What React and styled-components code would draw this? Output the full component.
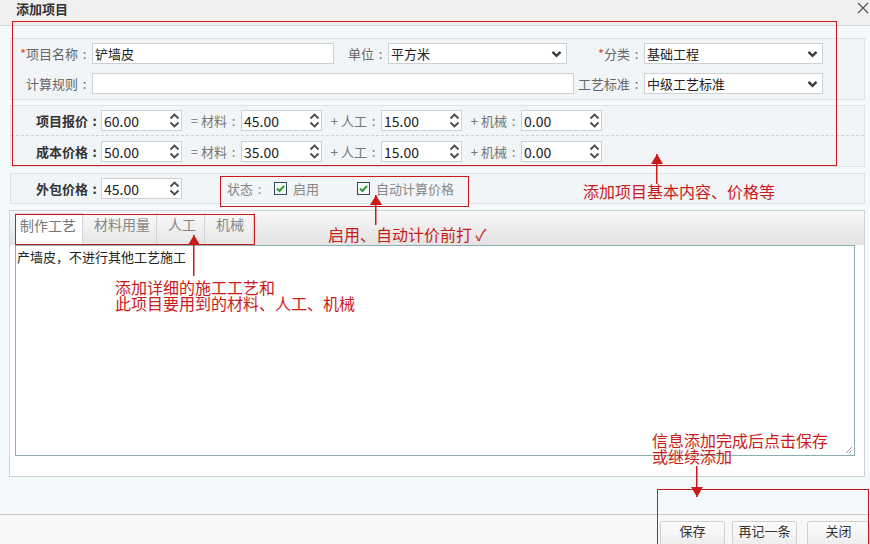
import styled, { createGlobalStyle } from "styled-components";

const GlobalStyle = createGlobalStyle`
    html, body {
        margin: 0;
        padding: 0;
        background: #ffffff;
    }
    * {
        box-sizing: border-box;
    }
`

const FONT = `"Noto Sans CJK SC", "Liberation Sans", sans-serif`;
const RED = "#cc1a1a";

const SpinIcon = () => (
    <svg width="11" height="17" viewBox="0 0 11 17">
        <path d="M1.5 6.5 L5.5 2.5 L9.5 6.5" fill="none" stroke="#4a4a4a" strokeWidth="1.8" />
        <path d="M1.5 10.5 L5.5 14.5 L9.5 10.5" fill="none" stroke="#4a4a4a" strokeWidth="1.8" />
    </svg>
)

const CaretIcon = () => (
    <svg width="11" height="8" viewBox="0 0 11 8">
        <path d="M1.5 1.8 L5.5 5.8 L9.5 1.8" fill="none" stroke="#3a3a3a" strokeWidth="2.4" />
    </svg>
)

const CheckIcon = () => (
    <svg width="13" height="13" viewBox="0 0 13 13">
        <rect x="0.5" y="0.5" width="12" height="12" fill="#f6f8f8" stroke="#2d4b5a" />
        <path d="M3 6.5 L5.5 9 L10 3.8" fill="none" stroke="#2f9a3a" strokeWidth="2" />
    </svg>
)

const C = () => <Colon>:</Colon>

export default function App() {
    return (
        <Dialog>
            <GlobalStyle />
            <TitleBar>
                <Title>添加项目</Title>
                <Close>
                    <svg width="12" height="12" viewBox="0 0 12 12">
                        <path d="M1 1 L11 11 M11 1 L1 11" stroke="#555" strokeWidth="1.2" />
                    </svg>
                </Close>
            </TitleBar>

            <Body>
                <Fieldset>
                    <Row>
                        <Label w={81}><Req>*</Req>项目名称<C /></Label>
                        <TextBox w={242}>铲墙皮</TextBox>
                        <Label w={54}>单位<C /></Label>
                        <Select w={179}><span>平方米</span><CaretIcon /></Select>
                        <Label w={77}><Req>*</Req>分类<C /></Label>
                        <Select w={179}><span>基础工程</span><CaretIcon /></Select>
                    </Row>
                    <Row>
                        <Label w={81}>计算规则<C /></Label>
                        <TextBox w={482} />
                        <Label w={70}>工艺标准<C /></Label>
                        <Select w={179}><span>中级工艺标准</span><CaretIcon /></Select>
                    </Row>
                </Fieldset>

                <PriceSet>
                    <PriceRow>
                        <BoldLabel>项目报价<C /></BoldLabel>
                        <Spinner><span>60.00</span><SpinIcon /></Spinner>
                        <OpLabel>= 材料<C /></OpLabel>
                        <Spinner><span>45.00</span><SpinIcon /></Spinner>
                        <OpLabel>+ 人工<C /></OpLabel>
                        <Spinner><span>15.00</span><SpinIcon /></Spinner>
                        <OpLabel>+ 机械<C /></OpLabel>
                        <Spinner><span>0.00</span><SpinIcon /></Spinner>
                    </PriceRow>
                    <PriceRow last>
                        <BoldLabel>成本价格<C /></BoldLabel>
                        <Spinner><span>50.00</span><SpinIcon /></Spinner>
                        <OpLabel>= 材料<C /></OpLabel>
                        <Spinner><span>35.00</span><SpinIcon /></Spinner>
                        <OpLabel>+ 人工<C /></OpLabel>
                        <Spinner><span>15.00</span><SpinIcon /></Spinner>
                        <OpLabel>+ 机械<C /></OpLabel>
                        <Spinner><span>0.00</span><SpinIcon /></Spinner>
                    </PriceRow>
                </PriceSet>

                <OutsourceSet>
                    <BoldLabel>外包价格<C /></BoldLabel>
                    <Spinner><span>45.00</span><SpinIcon /></Spinner>
                    <Status>
                        <StatusLabel>状态<C /></StatusLabel>
                        <Check><CheckIcon />启用</Check>
                        <Check><CheckIcon />自动计算价格</Check>
                    </Status>
                </OutsourceSet>

                <TabPanel>
                    <TabStrip>
                        <Tab active w={68}>制作工艺</Tab>
                        <Tab w={74}>材料用量</Tab>
                        <Tab w={48}>人工</Tab>
                        <Tab w={49}>机械</Tab>
                    </TabStrip>
                    <TextArea>
                        产墙皮，不进行其他工艺施工
                        <Grip>
                            <svg width="8" height="8" viewBox="0 0 8 8">
                                <path d="M7 1 L1 7 M7 4 L4 7" stroke="#999" strokeWidth="1" />
                            </svg>
                        </Grip>
                    </TextArea>
                </TabPanel>
            </Body>

            <Footer>
                <Button w={65}>保存</Button>
                <Button w={65}>再记一条</Button>
                <Button w={63} gap={10}>关闭</Button>
            </Footer>

            {/* red annotations drawn over the dialog */}
            <RedBox x={12} y={21} w={825} h={145} />
            <RedBox x={220} y={176} w={249} h={31} />
            <RedBox x={15} y={214} w={240} h={31} />
            <RedBox x={657} y={489} w={212} h={60} />

            <Arrow x={657} y={154} h={30} />
            <Note x={583} y={183}>添加项目基本内容、价格等</Note>

            <Arrow x={376} y={195} h={30} />
            <Note x={328} y={226}>启用、自动计价前打 ✓</Note>

            <Arrow x={194} y={235} h={41} />
            <Note x={115} y={279}>添加详细的施工工艺和<br />此项目要用到的材料、人工、机械</Note>

            <Note x={652} y={432}>信息添加完成后点击保存<br />或继续添加</Note>
            <Arrow x={697} y={466} h={31} down />
        </Dialog>
    )
}

const Dialog = styled.div`
    position: relative;
    width: 870px;
    height: 544px;
    overflow: hidden;
    display: flex;
    flex-direction: column;
    font-family: ${FONT};
    font-size: 13px;
    color: #666;
    background: #f4f9fc;
`

const TitleBar = styled.div`
    height: 26px;
    flex-shrink: 0;
    display: flex;
    justify-content: space-between;
    align-items: flex-start;
    padding: 1px 1px 0 16px;
    background: #f0f0f0;
    border-bottom: 1px solid #d6d6d6;
`

const Title = styled.div`
    font-size: 13px;
    font-weight: 700;
    color: #333;
    line-height: 16px;
`

const Close = styled.div`
    padding-top: 1px;
    line-height: 0;
`

const Body = styled.div`
    flex: 1;
    display: flex;
    flex-direction: column;
    padding: 12px 5px 0 10px;
    background: #f4f9fc;
`

const Fieldset = styled.div`
    display: flex;
    flex-direction: column;
    gap: 9px;
    padding: 4px 0 5px;
    background: #f2f5f8;
    border: 1px solid #dde3e8;
`

const Row = styled.div`
    display: flex;
    align-items: center;
    height: 21px;
`

const Colon = styled.span`
    display: inline-block;
    width: 13px;
    text-align: center;
`

const Label = styled.div`
    width: ${p => p.w}px;
    flex-shrink: 0;
    text-align: right;
    padding-right: 1px;
    white-space: nowrap;
    color: #666;
`

const Req = styled.span`
    color: #d9532c;
`

const TextBox = styled.div`
    width: ${p => p.w}px;
    height: 21px;
    flex-shrink: 0;
    padding-left: 2px;
    line-height: 19px;
    color: #222;
    background: #fff;
    border: 1px solid #cdd1d4;
`

const Select = styled.div`
    width: ${p => p.w}px;
    height: 21px;
    flex-shrink: 0;
    display: flex;
    justify-content: space-between;
    align-items: center;
    padding: 0 4px 0 2px;
    color: #222;
    background: #fff;
    border: 1px solid #cdd1d4;
`

const PriceSet = styled.div`
    margin-top: 5px;
    padding: 4px 0;
    background: #f2f5f8;
    border: 1px solid #dde3e8;
`

const PriceRow = styled.div`
    display: flex;
    align-items: center;
    padding-bottom: ${p => p.last ? "0" : "4px"};
    margin-bottom: ${p => p.last ? "0" : "5px"};
    border-bottom: ${p => p.last ? "none" : "1px dashed #cfd3d6"};
`

const BoldLabel = styled.div`
    width: 90px;
    flex-shrink: 0;
    text-align: right;
    white-space: nowrap;
    font-weight: 700;
    color: #333;
`

const OpLabel = styled.div`
    width: 59px;
    flex-shrink: 0;
    text-align: right;
    padding-right: 1px;
    white-space: nowrap;
    color: #777;
`

const Spinner = styled.div`
    width: 81px;
    height: 21px;
    flex-shrink: 0;
    display: flex;
    justify-content: space-between;
    align-items: center;
    padding: 0 1px 0 2px;
    font-size: 14px;
    color: #222;
    background: #fff;
    border: 1px solid #cdd1d4;
`

const OutsourceSet = styled.div`
    margin-top: 6px;
    display: flex;
    align-items: center;
    padding: 4px 0;
    background: #f2f5f8;
    border: 1px solid #dde3e8;
`

const Status = styled.div`
    display: flex;
    align-items: center;
    margin-left: 45px;
    color: #888;
`

const StatusLabel = styled.span`
    width: 47px;
    white-space: nowrap;
`

const Check = styled.label`
    display: flex;
    align-items: center;
    gap: 6px;
    margin-right: 38px;

    svg {
        flex-shrink: 0;
    }
`

const TabPanel = styled.div`
    margin-top: 6px;
    margin-left: -1px;
    padding-bottom: 20px;
    background: #fff;
    border: 1px solid #cdd3d6;
`

const TabStrip = styled.div`
    display: flex;
    height: 34px;
    padding: 2px 0 0 5px;
    background: linear-gradient(#f7f7f7, #e3e3e3);
`

const Tab = styled.div`
    width: ${p => p.w}px;
    height: 32px;
    padding-left: ${p => p.active ? 5 : 11}px;
    line-height: 22px;
    white-space: nowrap;
    font-size: 14px;
    color: ${p => p.active ? "#777" : "#888"};
    background: ${p => p.active ? "#fff" : "linear-gradient(#f8f8f8, #e6e6e6)"};
    border-right: 1px solid #d2d2d2;
    border-top: ${p => p.active ? "1px solid #d8d8d8" : "none"};
`

const TextArea = styled.div`
    position: relative;
    height: 211px;
    margin: 0 9px 0 5px;
    padding: 2px 0 0 1px;
    font-size: 13px;
    line-height: 18px;
    color: #222;
    background: #fff;
    border: 1px solid #8badb4;
`

const Grip = styled.div`
    position: absolute;
    right: 1px;
    bottom: 1px;
    line-height: 0;
`

const Footer = styled.div`
    height: 30px;
    flex-shrink: 0;
    display: flex;
    justify-content: flex-end;
    align-items: flex-start;
    padding-top: 6px;
    background: #f7f7f7;
    border-top: 1px solid #c8c8c8;
`

const Button = styled.div`
    width: ${p => p.w}px;
    height: 26px;
    margin-left: ${p => p.gap || 7}px;
    text-align: center;
    line-height: 16px;
    padding-top: 1px;
    font-size: 13px;
    color: #333;
    background: linear-gradient(#fdfdfd, #ececec);
    border: 1px solid #cfcfcf;
    border-radius: 3px;
`

const RedBox = styled.div`
    position: absolute;
    left: ${p => p.x}px;
    top: ${p => p.y}px;
    width: ${p => p.w}px;
    height: ${p => p.h}px;
    border: 1px solid ${RED};
    pointer-events: none;
`

const Arrow = styled.div`
    position: absolute;
    left: ${p => p.x - 1}px;
    top: ${p => p.y}px;
    width: 2px;
    height: ${p => p.h}px;
    background: linear-gradient(${RED}, ${RED}) no-repeat center / 1.5px 100%;

    &::before {
        content: "";
        position: absolute;
        left: -5px;
        ${p => p.down ? "bottom: 0;" : "top: 0;"}
        border-left: 6px solid transparent;
        border-right: 6px solid transparent;
        ${p => p.down ? `border-top: 10px solid ${RED};` : `border-bottom: 10px solid ${RED};`}
    }
`

const Note = styled.div`
    position: absolute;
    left: ${p => p.x}px;
    top: ${p => p.y}px;
    font-size: 16px;
    line-height: 16px;
    color: ${RED};
    white-space: nowrap;
`
